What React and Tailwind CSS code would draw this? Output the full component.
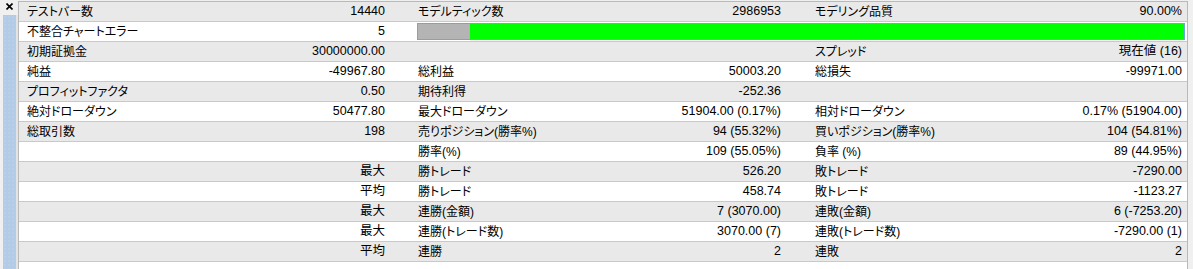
import React from "react";

const rows = [
  ["テストバー数", "14440", "モデルティック数", "2986953", "モデリング品質", "90.00%"],
  ["不整合チャートエラー", "5", "BAR"],
  ["初期証拠金", "30000000.00", "", "", "スプレッド", "現在値 (16)"],
  ["純益", "-49967.80", "総利益", "50003.20", "総損失", "-99971.00"],
  ["プロフィットファクタ", "0.50", "期待利得", "-252.36", "", ""],
  ["絶対ドローダウン", "50477.80", "最大ドローダウン", "51904.00 (0.17%)", "相対ドローダウン", "0.17% (51904.00)"],
  ["総取引数", "198", "売りポジション(勝率%)", "94 (55.32%)", "買いポジション(勝率%)", "104 (54.81%)"],
  ["", "", "勝率(%)", "109 (55.05%)", "負率 (%)", "89 (44.95%)"],
  ["", "最大", "勝トレード", "526.20", "敗トレード", "-7290.00"],
  ["", "平均", "勝トレード", "458.74", "敗トレード", "-1123.27"],
  ["", "最大", "連勝(金額)", "7 (3070.00)", "連敗(金額)", "6 (-7253.20)"],
  ["", "最大", "連勝(トレード数)", "3070.00 (7)", "連敗(トレード数)", "-7290.00 (1)"],
  ["", "平均", "連勝", "2", "連敗", "2"],
];

function Row({ r, i }) {
  const bg = i % 2 === 0 ? "bg-[#e9e9e9]" : "bg-white";
  return (
    <div className={`flex h-[20px] border-b border-[#c9c9c9] ${bg}`}>
      <div className="w-[181px] shrink-0 pl-[8px] flex items-center whitespace-nowrap">{r[0]}</div>
      <div className="w-[189px] shrink-0 pr-[4px] flex items-center justify-end whitespace-nowrap text-[12.5px]">{r[1]}</div>
      {r[2] === "BAR" ? (
        <div className="flex-1 pl-[28px] pr-[2px] py-[1px] flex">
          <div className="flex-1 flex border border-[#6ea6de]">
            <div className="w-[52px] bg-[#b4b4b4] bg-[radial-gradient(circle,#bebebe_0.5px,transparent_0.7px)] bg-[length:4px_4px]" />
            <div className="flex-1 bg-[#00ff00]" />
          </div>
        </div>
      ) : (
        <>
          <div className="w-[211px] shrink-0 pl-[29px] flex items-center whitespace-nowrap">{r[2]}</div>
          <div className="w-[185px] shrink-0 pr-[4px] flex items-center justify-end whitespace-nowrap text-[12.5px]">{r[3]}</div>
          <div className="w-[215px] shrink-0 pl-[30px] flex items-center whitespace-nowrap">{r[4]}</div>
          <div className="flex-1 pr-[5px] flex items-center justify-end whitespace-nowrap text-[12.5px]">{r[5]}</div>
        </>
      )}
    </div>
  );
}

export default function App() {
  return (
    <div
      className="w-[1193px] h-[269px] overflow-hidden flex bg-[#f0f0f0] text-black text-[12px] leading-none [font-feature-settings:'palt'] font-['Liberation_Sans','Noto_Sans_CJK_JP',sans-serif]"
    >
      <div className="w-[18px] shrink-0 flex flex-col">
        <div className="h-[15px] flex items-start pl-[6px] pt-[3px]">
          <svg width="7" height="7" viewBox="0 0 7 7">
            <path d="M0.5 0.5 L6.5 6.5 M6.5 0.5 L0.5 6.5" stroke="#000" strokeWidth="1.6" />
          </svg>
        </div>
        <div className="flex-1 flex">
          <div className="ml-[3px] w-[13px] bg-[#b3cbe6] bg-[radial-gradient(circle,#c4d8ee_0.5px,transparent_0.8px)] bg-[length:4px_4px]" />
          <div className="w-[2px] bg-[#e3e3e3]" />
        </div>
      </div>
      <div className="w-[1170px] shrink-0 mt-[1px] h-[268px] bg-white border-t border-l border-r border-[#b9b9b9] flex flex-col">
        {rows.map((r, i) => (
          <Row key={i} r={r} i={i} />
        ))}
      </div>
      <div className="flex-1" />
    </div>
  );
}
